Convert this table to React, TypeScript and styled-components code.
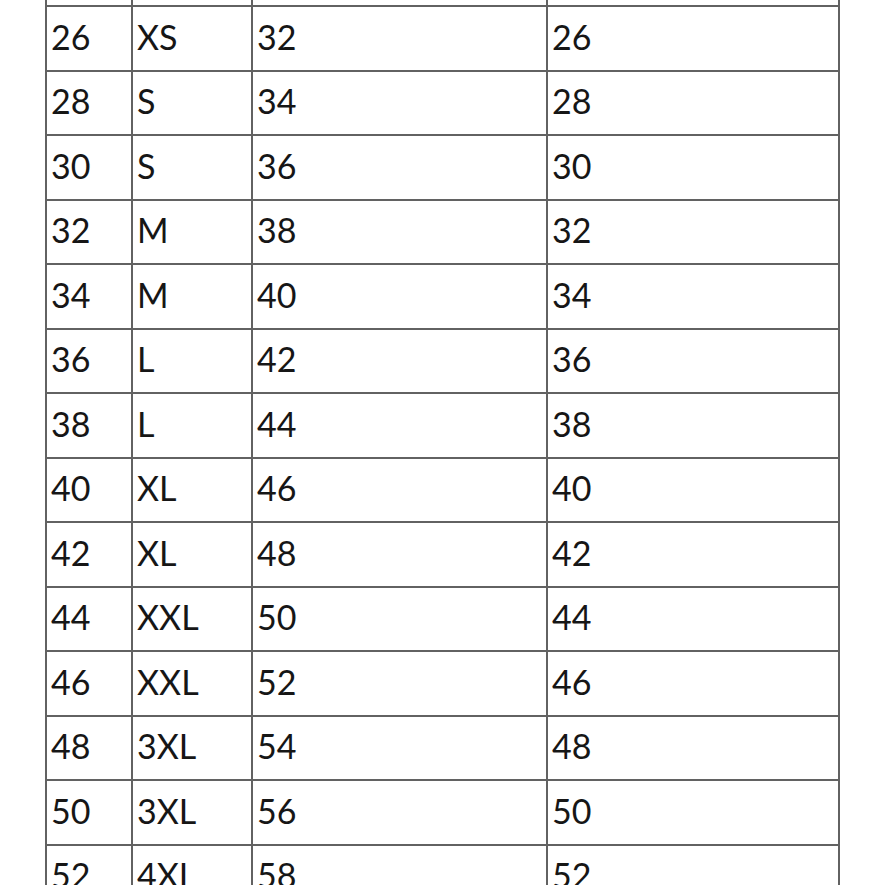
import React from "react";
import styled, { createGlobalStyle } from "styled-components";

const Global = createGlobalStyle`
  html, body { margin: 0; padding: 0; background: #ffffff; overflow: hidden; }
  body { font-family: Lato, "Open Sans", sans-serif; }
`;

const Page = styled.div`
  width: 885px;
  height: 885px;
  overflow: hidden;
  background: #ffffff;
`;

const Table = styled.table`
  margin-top: -59.5px;
  margin-left: 45px;
  width: 793px;
  table-layout: fixed;
  border-collapse: collapse;
  font-family: Lato, "Open Sans", sans-serif;
  font-size: 34px;
  color: #161616;
`;

const Row = styled.tr`
  height: 64.5px;
`;

const Cell = styled.td`
  border: 2px solid #626262;
  padding: 0 0 3px 4px;
  vertical-align: middle;
  line-height: 1;
  white-space: nowrap;
  overflow: hidden;
`;

const HeadCell = styled.th`
  border: 2px solid #626262;
  padding: 0;
`;

const rows: [string, string, string, string][] = [
  ["26", "XS", "32", "26"],
  ["28", "S", "34", "28"],
  ["30", "S", "36", "30"],
  ["32", "M", "38", "32"],
  ["34", "M", "40", "34"],
  ["36", "L", "42", "36"],
  ["38", "L", "44", "38"],
  ["40", "XL", "46", "40"],
  ["42", "XL", "48", "42"],
  ["44", "XXL", "50", "44"],
  ["46", "XXL", "52", "46"],
  ["48", "3XL", "54", "48"],
  ["50", "3XL", "56", "50"],
  ["52", "4XL", "58", "52"],
];

export default function App() {
  return (
    <Page>
      <Global />
      <Table>
        <colgroup>
          <col style={{ width: 86 }} />
          <col style={{ width: 120 }} />
          <col style={{ width: 295 }} />
          <col style={{ width: 292 }} />
        </colgroup>
        <thead>
          <Row>
            <HeadCell aria-label="UK" />
            <HeadCell aria-label="Size" />
            <HeadCell aria-label="EU" />
            <HeadCell aria-label="US" />
          </Row>
        </thead>
        <tbody>
          {rows.map((r, i) => (
            <Row key={i}>
              {r.map((c, j) => (
                <Cell key={j}>{c}</Cell>
              ))}
            </Row>
          ))}
        </tbody>
      </Table>
    </Page>
  );
}
